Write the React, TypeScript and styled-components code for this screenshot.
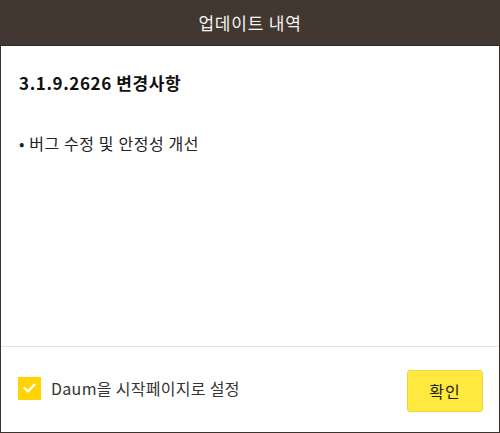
import React from "react";
import styled, { createGlobalStyle } from "styled-components";

const Global = createGlobalStyle`
  html, body { margin: 0; padding: 0; background: #ffffff; }
  body { font-family: "Noto Sans CJK KR", "Noto Sans", sans-serif; }
  * { box-sizing: border-box; }
`;

const Window = styled.div`
  width: 500px;
  height: 433px;
  display: flex;
  flex-direction: column;
  background: #ffffff;
`;

const Header = styled.div`
  height: 46px;
  flex: none;
  background: #433731;
  border-bottom: 1px solid #2e2521;
  display: flex;
  align-items: center;
  justify-content: center;
  color: #f4f4f4;
  font-size: 17px;
  letter-spacing: 0.8px;
  padding-bottom: 1px;
`;

const Frame = styled.div`
  flex: 1;
  display: flex;
  flex-direction: column;
  border-left: 1px solid #3d322c;
  border-right: 1px solid #3d322c;
  border-bottom: 1px solid #3d322c;
`;

const Content = styled.div`
  flex: 1;
  padding: 25px 18px 0 18px;
  border-bottom: 1px solid #e2e2e2;
`;

const Title = styled.h1`
  margin: 0;
  font-size: 17px;
  line-height: 24px;
  font-weight: 700;
  letter-spacing: 0.6px;
  color: #111111;
`;

const List = styled.ul`
  margin: 37px 0 0 0;
  padding: 0;
  list-style: none;
`;

const Item = styled.li`
  font-size: 16px;
  line-height: 22px;
  letter-spacing: 0.6px;
  color: #222222;
`;

const Footer = styled.div`
  height: 85px;
  flex: none;
  display: flex;
  justify-content: space-between;
  align-items: flex-start;
  padding: 23px 16px 0 17px;
`;

const CheckRow = styled.label`
  display: flex;
  align-items: center;
  gap: 10px;
  margin-top: 6px;
  font-size: 16px;
  letter-spacing: 0.3px;
  color: #333333;
`;

const Box = styled.span`
  width: 23px;
  height: 23px;
  background: #ffd400;
  display: flex;
  align-items: center;
  justify-content: center;
`;

const OkButton = styled.button`
  width: 76px;
  height: 42px;
  background: #ffe93f;
  border: 1px solid #f0d43a;
  border-radius: 3px;
  font-family: inherit;
  font-size: 16px;
  letter-spacing: 1px;
  color: #222222;
  padding: 0;
  cursor: pointer;
`;

export default function App() {
  return (
    <>
      <Global />
      <Window>
        <Header>업데이트 내역</Header>
        <Frame>
          <Content>
            <Title>3.1.9.2626 변경사항</Title>
            <List>
              <Item>• 버그 수정 및 안정성 개선</Item>
            </List>
          </Content>
          <Footer>
            <CheckRow>
              <Box>
                <svg width="13" height="10" viewBox="0 0 13 10">
                  <path d="M1.5 5 L5 8.3 L11.5 1.7" stroke="#ffffff" strokeWidth="2.4" fill="none" strokeLinecap="round" strokeLinejoin="round" />
                </svg>
              </Box>
              Daum을 시작페이지로 설정
            </CheckRow>
            <OkButton>확인</OkButton>
          </Footer>
        </Frame>
      </Window>
    </>
  );
}
